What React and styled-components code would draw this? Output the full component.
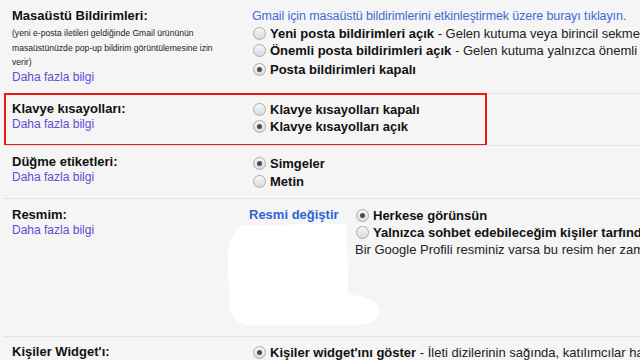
import React from "react";
import styled, { createGlobalStyle, css } from "styled-components";

const GlobalStyle = createGlobalStyle`
  html, body { margin: 0; padding: 0; }
  body {
    background: #f5f5f5;
    font-family: "Liberation Sans", Arial, sans-serif;
    color: #222;
    overflow: hidden;
    width: 640px;
    height: 360px;
  }
`;

const Table = styled.div`
  margin-left: 3px;
  width: 637px;
`;

const Row = styled.div`
  position: relative;
  display: grid;
  grid-template-columns: 246px 1fr;
  box-sizing: border-box;
  height: ${(p) => (p.$h ? `${p.$h}px` : "auto")};
  padding-top: ${(p) => p.$pt}px;
  border-top: ${(p) => (p.$first ? "none" : "1px solid #e3e3e3")};
  white-space: nowrap;
  ${(p) =>
    p.$highlight &&
    css`
      &::after {
        content: "";
        position: absolute;
        left: 1px;
        top: -1px;
        width: 483px;
        height: 53px;
        box-sizing: border-box;
        border: 2px solid #f21515;
        pointer-events: none;
      }
    `}
`;

const Label = styled.div`
  padding-left: 9px;
  display: flex;
  flex-direction: column;
`;

const Title = styled.div`
  font-weight: bold;
  font-size: 13px;
  line-height: 16px;
  color: #111;
`;

const Note = styled.div`
  font-size: 8.6px;
  line-height: 14.5px;
  white-space: pre;
  margin-top: 2px;
  color: #222;
`;

const LearnMore = styled.a`
  font-size: 12px;
  line-height: 14px;
  color: #5a4fd2;
  text-decoration: none;
  cursor: pointer;
`;

const Content = styled.div`
  display: flex;
  flex-direction: column;
  padding-left: 3px;
`;

const TopLink = styled.a`
  font-size: 12.5px;
  letter-spacing: -0.1px;
  line-height: 16px;
  color: #3d6ad6;
  text-decoration: none;
  margin-bottom: 0.5px;
`;

const Option = styled.label`
  display: flex;
  align-items: center;
  height: ${(p) => p.$h || 17}px;
  margin-top: ${(p) => p.$mt || 0}px;
  font-size: 13px;
  color: #222;
`;

const Radio = styled.span`
  flex: none;
  width: 13px;
  height: 13px;
  box-sizing: border-box;
  border-radius: 50%;
  border: 1px solid #ababab;
  background: linear-gradient(#f7f7f7, #dadada);
  margin: 0 4px 0 1px;
  display: flex;
  align-items: center;
  justify-content: center;
  &::after {
    content: "";
    width: 5px;
    height: 5px;
    border-radius: 50%;
    background: ${(p) => (p.$checked ? "#4b4b4b" : "transparent")};
  }
`;

const Strong = styled.b`
  font-weight: bold;
  color: #111;
`;

const Plain = styled.span`
  white-space: pre;
`;

const PictureGrid = styled.div`
  display: grid;
  grid-template-columns: 103px 1fr;
`;

const PictureCol = styled.div`
  display: flex;
  flex-direction: column;
`;

const ChangeLink = styled.a`
  font-size: 13px;
  line-height: 16px;
  font-weight: bold;
  color: #2f63d6;
  text-decoration: none;
`;

const Blob = styled.svg`
  display: block;
  margin: 1px 0 0 -21px;
`;

const Hint = styled.div`
  font-size: 13px;
  line-height: 17px;
  color: #222;
`;

function Opt({ checked, strong, rest, h, mt }) {
  return (
    <Option $h={h} $mt={mt}>
      <Radio $checked={checked} />
      <Strong>{strong}</Strong>
      {rest && <Plain>{" - " + rest}</Plain>}
    </Option>
  );
}

export default function App() {
  return (
    <>
      <GlobalStyle />
      <Table>
        <Row $first $h={93} $pt={8}>
          <Label>
            <Title>Masaüstü Bildirimleri:</Title>
            <Note>{"(yeni e-posta iletileri geldiğinde Gmail ürününün\nmasaüstünüzde pop-up bildirim görüntülemesine izin\nverir)"}</Note>
            <LearnMore>Daha fazla bilgi</LearnMore>
          </Label>
          <Content>
            <TopLink>Gmail için masaüstü bildirimlerini etkinleştirmek üzere burayı tıklayın.</TopLink>
            <Opt strong="Yeni posta bildirimleri açık" rest="Gelen kutuma veya birincil sekmeme yeni bir ileti geldiğinde bildir" />
            <Opt strong="Önemli posta bildirimleri açık" rest="Gelen kutuma yalnızca önemli bir ileti geldiğinde bildir" />
            <Opt checked strong="Posta bildirimleri kapalı" mt={2} />
          </Content>
        </Row>

        <Row $h={52} $pt={7} $highlight>
          <Label>
            <Title>Klavye kısayolları:</Title>
            <LearnMore>Daha fazla bilgi</LearnMore>
          </Label>
          <Content>
            <Opt strong="Klavye kısayolları kapalı" />
            <Opt checked strong="Klavye kısayolları açık" />
          </Content>
        </Row>

        <Row $h={53} $pt={8}>
          <Label>
            <Title>Düğme etiketleri:</Title>
            <LearnMore>Daha fazla bilgi</LearnMore>
          </Label>
          <Content>
            <Opt checked strong="Simgeler" h={18} />
            <Opt strong="Metin" h={18} />
          </Content>
        </Row>

        <Row $h={138} $pt={8}>
          <Label>
            <Title>Resmim:</Title>
            <LearnMore>Daha fazla bilgi</LearnMore>
          </Label>
          <PictureGrid>
            <PictureCol>
              <ChangeLink>Resmi değiştir</ChangeLink>
              <Blob width="153" height="102" viewBox="0 0 153 102">
                <path
                  d="M13 1 L119 0 L120 70 Q150 74 152 86 Q150 100 128 101 L22 101 Q2 100 1 78 L0 30 Q2 10 13 1 Z"
                  fill="#ffffff"
                />
              </Blob>
            </PictureCol>
            <Content>
              <Opt checked strong="Herkese görünsün" />
              <Opt strong="Yalnızca sohbet edebileceğim kişiler tarfından görünsün" />
              <Hint>Bir Google Profili resminiz varsa bu resim her zaman herkese görünür.</Hint>
            </Content>
          </PictureGrid>
        </Row>

        <Row $pt={7}>
          <Label>
            <Title>Kişiler Widget'ı:</Title>
          </Label>
          <Content>
            <Opt checked strong="Kişiler widget'ını göster" rest="İleti dizilerinin sağında, katılımcılar hakkında bilgi göster" h={16} />
          </Content>
        </Row>
      </Table>
    </>
  );
}
